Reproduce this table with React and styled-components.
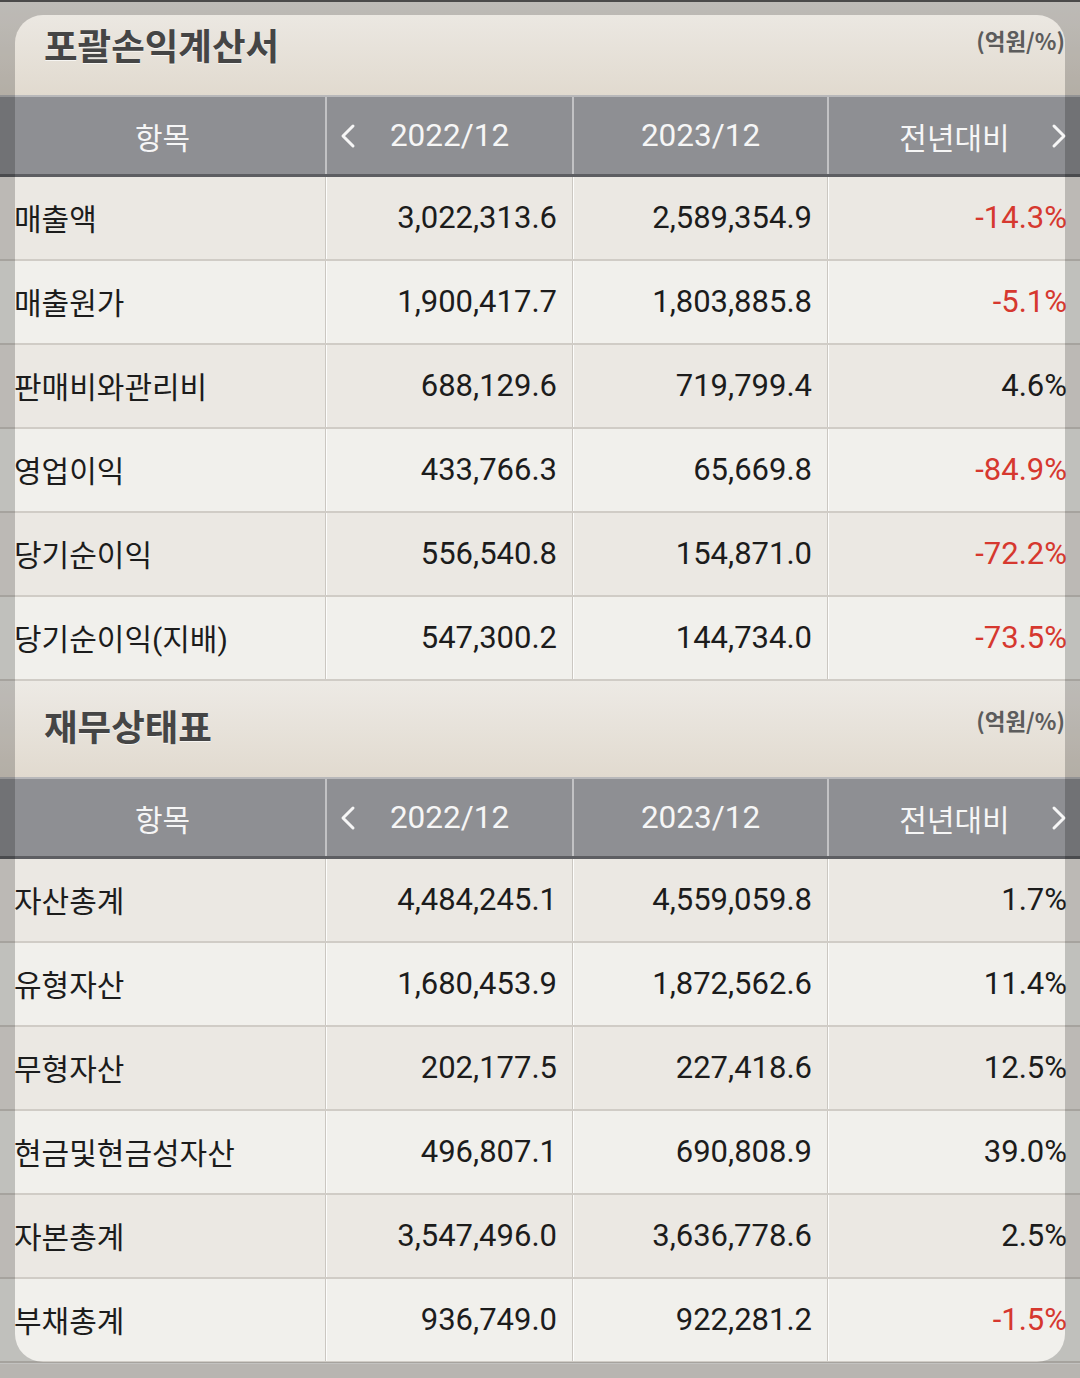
import React from "react";
import styled, { createGlobalStyle } from "styled-components";

const income = [
  ["매출액", "3,022,313.6", "2,589,354.9", "-14.3%"],
  ["매출원가", "1,900,417.7", "1,803,885.8", "-5.1%"],
  ["판매비와관리비", "688,129.6", "719,799.4", "4.6%"],
  ["영업이익", "433,766.3", "65,669.8", "-84.9%"],
  ["당기순이익", "556,540.8", "154,871.0", "-72.2%"],
  ["당기순이익(지배)", "547,300.2", "144,734.0", "-73.5%"],
];

const balance = [
  ["자산총계", "4,484,245.1", "4,559,059.8", "1.7%"],
  ["유형자산", "1,680,453.9", "1,872,562.6", "11.4%"],
  ["무형자산", "202,177.5", "227,418.6", "12.5%"],
  ["현금및현금성자산", "496,807.1", "690,808.9", "39.0%"],
  ["자본총계", "3,547,496.0", "3,636,778.6", "2.5%"],
  ["부채총계", "936,749.0", "922,281.2", "-1.5%"],
];

const Chevron = ({ dir }) => (
  <svg width="18" height="26" viewBox="0 0 18 26">
    <polyline
      points={dir === "left" ? "14,3 4,13 14,23" : "4,3 14,13 4,23"}
      fill="none"
      stroke="#f6f6f6"
      strokeWidth="3"
      strokeLinecap="round"
      strokeLinejoin="round"
    />
  </svg>
);

const Statement = ({ title, rows, titleHeight }) => (
  <section>
    <TitleBar $height={titleHeight}>
      <Title>{title}</Title>
      <Unit>(억원/%)</Unit>
    </TitleBar>
    <HeaderRow>
      <HeadCell>항목</HeadCell>
      <HeadCell>
        <ChevronSlot $side="left">
          <Chevron dir="left" />
        </ChevronSlot>
        <span>2022/12</span>
        <span />
      </HeadCell>
      <HeadCell>2023/12</HeadCell>
      <HeadCell>
        <span />
        <span>전년대비</span>
        <ChevronSlot $side="right">
          <Chevron dir="right" />
        </ChevronSlot>
      </HeadCell>
    </HeaderRow>
    {rows.map((r, i) => (
      <Row key={r[0]} $odd={i % 2 === 0}>
        <Label>{r[0]}</Label>
        <Num>{r[1]}</Num>
        <Num>{r[2]}</Num>
        <Num $last $neg={r[3].startsWith("-")}>
          {r[3]}
        </Num>
      </Row>
    ))}
  </section>
);

const App = () => {
  return (
    <>
      <GlobalStyle />
      <Screen>
        <Statement title="포괄손익계산서" rows={income} titleHeight={93} />
        <Statement title="재무상태표" rows={balance} titleHeight={96} />
        <BottomPad />
        <Spotlight />
      </Screen>
    </>
  );
};

export default App;

const GlobalStyle = createGlobalStyle`
  body {
    margin: 0;
    background: #b9b7b2;
    font-family: Roboto, "Noto Sans CJK KR", sans-serif;
  }
`;

const Screen = styled.div`
  position: relative;
  width: 1080px;
  height: 1378px;
  overflow: hidden;
  border-top: 2px solid #4a4a4a;
  box-sizing: border-box;
  background: #e8e5e0;
`;

const TitleBar = styled.div`
  height: ${(p) => p.$height}px;
  display: flex;
  align-items: center;
  justify-content: space-between;
  padding: 0 15px 0 44px;
  box-sizing: border-box;
  background: linear-gradient(#edeae5, #e1dacf);
`;

const Title = styled.h2`
  margin: 0 0 8px;
  font-family: "Noto Sans CJK KR", sans-serif;
  font-size: 36.5px;
  font-weight: 700;
  color: #454545;
  text-shadow: 0 1px 0 rgba(255, 255, 255, 0.7);
`;

const Unit = styled.span`
  margin-bottom: 18px;
  font-family: "Noto Sans CJK KR", sans-serif;
  font-size: 22.5px;
  font-weight: 700;
  color: #5c5c5c;
`;

const columns = "325px 247px 255px 1fr";

const HeaderRow = styled.div`
  display: grid;
  grid-template-columns: ${columns};
  height: 82px;
  box-sizing: border-box;
  background: #8e8f93;
  border-top: 2px solid #b8b8ba;
  border-bottom: 3px solid #5d5e62;
`;

const HeadCell = styled.div`
  display: grid;
  grid-template-columns: 1fr auto 1fr;
  align-items: center;
  justify-items: center;
  font-size: 30px;
  color: #f6f6f6;
  & + & {
    border-left: 2px solid #c2c2c4;
  }
  &:nth-child(2),
  &:nth-child(3) {
    font-size: 31.5px;
  }
  &:first-child,
  &:nth-child(3) {
    display: flex;
    justify-content: center;
  }
`;

const ChevronSlot = styled.span`
  display: flex;
  justify-self: ${(p) => (p.$side === "left" ? "start" : "end")};
  padding: 0 12px;
`;

const Row = styled.div`
  display: grid;
  grid-template-columns: ${columns};
  height: 84px;
  box-sizing: border-box;
  background: ${(p) => (p.$odd ? "#ebe8e3" : "#f1f0ec")};
  border-bottom: 2px solid #d0ccc6;
`;

const Label = styled.div`
  display: flex;
  align-items: center;
  padding: 0 0 2px 14px;
  font-size: 30px;
  color: #1c1c1c;
`;

const Num = styled.div`
  display: flex;
  align-items: center;
  justify-content: flex-end;
  padding: 0 ${(p) => (p.$last ? 13 : 15)}px 2px 0;
  font-size: 31px;
  color: ${(p) => (p.$neg ? "#d6382f" : "#1c1c1c")};
  border-left: 1px solid #cbc7c1;
  box-shadow: inset 1px 0 0 #fdfdfc;
`;

const BottomPad = styled.div`
  height: 15px;
  background: #e6e3de;
  border-top: 1px solid #f4f3f0;
`;

const Spotlight = styled.div`
  position: absolute;
  top: 13px;
  left: 15px;
  right: 15px;
  bottom: 16px;
  border-radius: 28px;
  box-shadow: 0 0 0 3000px rgba(0, 0, 0, 0.2);
  pointer-events: none;
`;
